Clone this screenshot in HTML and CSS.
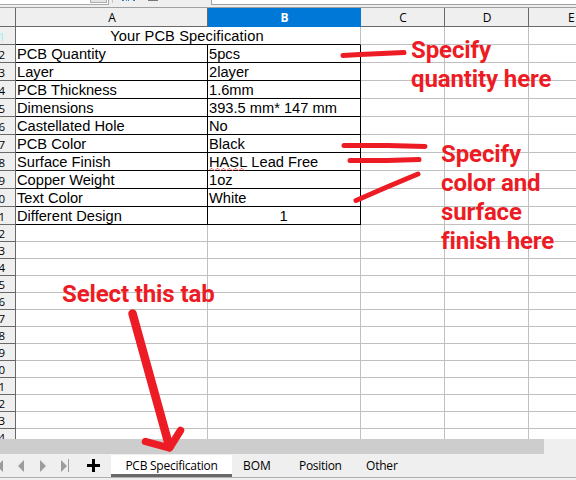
FILE: index.html
```
<!DOCTYPE html>
<html lang="en">
<head>
<meta charset="utf-8">
<title>PCB Specification</title>
<link rel="stylesheet" href="styles.css">
</head>
<body>
<div class="app">
  <div class="toolbar">
    <div class="namebox"><span class="drop"></span></div>
    <svg class="tools" width="102" height="7" viewBox="0 0 102 7"><path d="M3.500 0v3" stroke="#c4c4c4"/><path d="M13 0h2M17 0h1M19 0h1M24 0h2" stroke="#3a7ab8" stroke-width="2"/><path d="M39 .5h10" stroke="#777"/></svg>
    <div class="formula"></div>
  </div>
  <div class="sheet">
    <div class="row head"><div></div><div>A</div><div class="sel">B</div><div>C</div><div>D</div><div>E</div></div>
    <div class="row data title"><div class="cur">1</div><div class="merged">Your PCB Specification</div><div></div><div></div><div></div></div>
    <div class="row data"><div>2</div><div>PCB Quantity</div><div>5pcs</div><div></div><div></div><div></div></div>
    <div class="row data"><div>3</div><div>Layer</div><div>2layer</div><div></div><div></div><div></div></div>
    <div class="row data"><div>4</div><div>PCB Thickness</div><div>1.6mm</div><div></div><div></div><div></div></div>
    <div class="row data"><div>5</div><div>Dimensions</div><div>393.5 mm* 147 mm</div><div></div><div></div><div></div></div>
    <div class="row data"><div>6</div><div>Castellated Hole</div><div>No</div><div></div><div></div><div></div></div>
    <div class="row data"><div>7</div><div>PCB Color</div><div>Black</div><div></div><div></div><div></div></div>
    <div class="row data"><div>8</div><div>Surface Finish</div><div><span class="typo">HASL<svg width="38" height="3" viewBox="0 0 38 3"><path d="M0 2.500l2-2h1l2 2h1l2-2h1l2 2h1l2-2h1l2 2h1l2-2h1l2 2h1l2-2h1l2 2h1l2-2h1l2 2" fill="none" stroke="#f04a4a" stroke-width=".9"/></svg></span> Lead Free</div><div></div><div></div><div></div></div>
    <div class="row data"><div>9</div><div>Copper Weight</div><div>1oz</div><div></div><div></div><div></div></div>
    <div class="row data"><div>10</div><div>Text Color</div><div>White</div><div></div><div></div><div></div></div>
    <div class="row data"><div>11</div><div>Different Design</div><div class="num">1</div><div></div><div></div><div></div></div>
    <div class="row"><div>12</div><div></div><div></div><div></div><div></div><div></div></div>
    <div class="row"><div>13</div><div></div><div></div><div></div><div></div><div></div></div>
    <div class="row"><div>14</div><div></div><div></div><div></div><div></div><div></div></div>
    <div class="row"><div>15</div><div></div><div></div><div></div><div></div><div></div></div>
    <div class="row"><div>16</div><div></div><div></div><div></div><div></div><div></div></div>
    <div class="row"><div>17</div><div></div><div></div><div></div><div></div><div></div></div>
    <div class="row"><div>18</div><div></div><div></div><div></div><div></div><div></div></div>
    <div class="row"><div>19</div><div></div><div></div><div></div><div></div><div></div></div>
    <div class="row"><div>20</div><div></div><div></div><div></div><div></div><div></div></div>
    <div class="row"><div>21</div><div></div><div></div><div></div><div></div><div></div></div>
    <div class="row"><div>22</div><div></div><div></div><div></div><div></div><div></div></div>
    <div class="row"><div>23</div><div></div><div></div><div></div><div></div><div></div></div>
    <div class="row"><div>24</div><div></div><div></div><div></div><div></div><div></div></div>
  </div>
  <div class="scroll"><div class="thumb"></div></div>
  <div class="tabs">
    <svg class="nav" width="111" height="22" viewBox="0 0 111 22"><path d="M3 5v12l-6-6zM24 5v12l-6-6zM40 5v12l6-6zM61 5v12l6-6z" fill="#9c9c9c"/><path d="M68.500 4v13" stroke="#9c9c9c"/><path d="M87 10.500h13M93.500 4v13" stroke="#000" stroke-width="3"/></svg>
    <div class="tab active">PCB Specification</div>
    <div class="tab bom">BOM</div>
    <div class="tab pos">Position</div>
    <div class="tab oth">Other</div>
  </div>
</div>
<svg class="marks" width="576" height="480" viewBox="0 0 576 480" fill="none" stroke="#ed1c24" stroke-width="5" stroke-linecap="round" stroke-linejoin="round">
  <path d="M343 55.500L360 54.500L404 52.500M344 145.500H388L425 146.500M350 160.500H387L419 159.500M356 200.500L387 187L418 174"/>
  <path d="M132.500 313.500L169.500 447" stroke-width="8.500"/>
  <path d="M145.500 441.500L169.500 448L180.500 430.500" stroke-width="7.500"/>
</svg>
<div class="note n1">Specify<br>quantity here</div>
<div class="note n2">Specify<br>color and<br>surface<br>finish here</div>
<div class="note n3">Select this tab</div>
</body>
</html>
```
FILE: styles.css
```
* { box-sizing: border-box; }
body { margin: 0; width: 576px; height: 480px; overflow: hidden; position: relative; background: #efefef; }
.app { display: flex; flex-direction: column; width: 576px; height: 480px; font: 12px "Open Sans", sans-serif; color: #000; }

.toolbar { display: flex; height: 8px; flex: none; border-bottom: 1px solid #a0a0a0; }
.namebox { width: 109px; height: 5px; background: #fff; border: solid #a8a8a8; border-width: 0 1px 1px 0; display: flex; justify-content: flex-end; padding-right: 1px; }
.drop { width: 17px; height: 3px; background: #e4e4e4; border: solid #adadad; border-width: 0 1px 1px; }
.tools { width: 102px; flex: none; }
.formula { flex: 1; height: 5px; background: #fff; border: solid #a0a0a0; border-width: 0 0 1px 1px; }

.sheet { height: 431px; flex: none; overflow: hidden; background: #fff; }
.row { display: grid; grid-template-columns: 16px 192px 153px 84px 84px 47px; grid-template-rows: 100%; height: 17px; }
.row > div { border: solid #c0c0c0; border-width: 0 1px 1px 0; line-height: 16px; white-space: nowrap; min-width: 0; min-height: 0; }
.row > div:last-child { border-right: 0; }
.row > div:first-child { background: #efefef; border-color: #696969; display: flex; justify-content: flex-end; padding-right: 10px; font-size: 11.5px; line-height: 18px; }
.row.head { height: 19px; }
.row.head > div, .row.head > div:first-child { background: #efefef; border-color: #696969; text-align: center; line-height: 19px; font-size: 12px; }
.row.head > div:nth-child(n+2) { padding-left: 1px; }
.row.head > div:last-child { padding-left: 39px; text-align: left; }
.row.head > .sel { background: #0078d7; border-color: #0078d7; color: #fff; font-weight: 700; }
.row.data { height: 18px; }
.row.data > div { line-height: 19px; }
.row.data > div:nth-child(2), .row.data > div:nth-child(3) { border-color: #000; font-family: "Liberation Sans", sans-serif; font-size: 14.67px; padding-left: 1px; }
.row.title > .merged { grid-column: span 2; text-align: center; letter-spacing: .11px; padding-right: 3px; }
.row.title > div.merged { border-right-color: #c0c0c0; }
.row.title > div:nth-child(3) { border-color: #c0c0c0; }
.row > div.cur { color: #9ff0f0; }
.row.data > div.num { text-align: center; padding: 0 1px 0 0; }
.typo { position: relative; }
.typo svg { position: absolute; left: 0; bottom: -1px; }

.scroll { height: 15px; flex: none; }
.thumb { width: 544px; height: 15px; background: #cdcdcd; }
.tabs { display: flex; height: 24px; flex: none; border-bottom: 1px solid #b0b0b0; padding-top: 1px; }
.nav { flex: none; }
.tab { line-height: 22px; white-space: nowrap; height: 22px; }
.tab.active { width: 121px; background: #fff; border-bottom: 3px solid #696969; text-align: center; letter-spacing: -.25px; }
.bom { width: 57px; padding-left: 11px; }
.pos { width: 67px; padding-left: 10px; letter-spacing: -.3px; }
.oth { padding-left: 10px; letter-spacing: -.2px; }

.marks { position: absolute; left: 0; top: 0; }
.note { position: absolute; font: 700 24px/29px Roboto, sans-serif; color: #ed1c24; white-space: nowrap; letter-spacing: -.12px; }
.n1 { left: 411px; top: 36px; }
.n2 { left: 441px; top: 140px; }
.n3 { left: 62px; top: 280px; }
```
